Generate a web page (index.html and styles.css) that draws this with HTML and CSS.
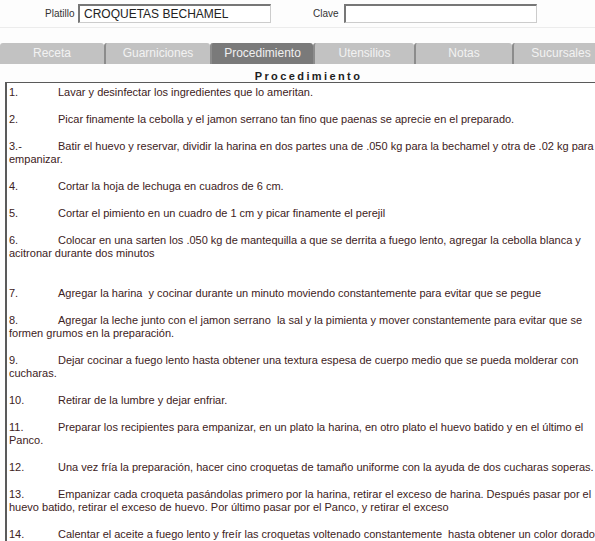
FILE: index.html
```html
<!DOCTYPE html>
<html lang="es">
<head>
<meta charset="utf-8">
<link rel="stylesheet" href="styles.css">
</head>
<body>
<div class="top">
  <label class="lbl lbl-platillo">Platillo</label>
  <div class="inp inp-platillo">CROQUETAS BECHAMEL</div>
  <label class="lbl lbl-clave">Clave</label>
  <div class="inp inp-clave"></div>
</div>
<div class="tabs">
  <div class="tab t1">Receta</div>
  <div class="tab t2">Guarniciones</div>
  <div class="tab t3 active">Procedimiento</div>
  <div class="tab t4">Utensilios</div>
  <div class="tab t5">Notas</div>
  <div class="tab t6">Sucursales</div>
</div>
<div class="title">Procedimiento</div>
<div class="box">
  <p><span class="n">1.</span>Lavar y desinfectar los ingredientes que lo ameritan.</p>
  <p><span class="n">2.</span>Picar finamente la cebolla y el jamon serrano tan fino que paenas se aprecie en el preparado.</p>
  <p><span class="n">3.-</span>Batir el huevo y reservar, dividir la harina en dos partes una de .050 kg para la bechamel y otra de .02 kg para empanizar.</p>
  <p><span class="n">4.</span>Cortar la hoja de lechuga en cuadros de 6 cm.</p>
  <p><span class="n">5.</span>Cortar el pimiento en un cuadro de 1 cm y picar finamente el perejil</p>
  <p class="extra"><span class="n">6.</span>Colocar en una sarten los .050 kg de mantequilla a que se derrita a fuego lento, agregar la cebolla blanca y acitronar durante dos minutos</p>
  <p><span class="n">7.</span>Agregar la harina&nbsp; y cocinar durante un minuto moviendo constantemente para evitar que se pegue</p>
  <p><span class="n">8.</span>Agregar la leche junto con el jamon serrano&nbsp; la sal y la pimienta y mover constantemente para evitar que se formen grumos en la preparación.</p>
  <p><span class="n">9.</span>Dejar cocinar a fuego lento hasta obtener una textura espesa de cuerpo medio que se pueda molderar con cucharas.</p>
  <p><span class="n">10.</span>Retirar de la lumbre y dejar enfriar.</p>
  <p><span class="n">11.</span>Preparar los recipientes para empanizar, en un plato la harina, en otro plato el huevo batido y en el último el Panco.</p>
  <p><span class="n">12.</span>Una vez fría la preparación, hacer cino croquetas de tamaño uniforme con la ayuda de dos cucharas soperas.</p>
  <p><span class="n">13.</span>Empanizar cada croqueta pasándolas primero por la harina, retirar el exceso de harina. Después pasar por el huevo batido, retirar el exceso de huevo. Por último pasar por el Panco, y retirar el exceso</p>
  <p><span class="n">14.</span>Calentar el aceite a fuego lento y freír las croquetas voltenado constantemente&nbsp; hasta obtener un color dorado</p>
</div>
</body>
</html>
```
FILE: styles.css
```css
html, body {
  margin: 0;
  padding: 0;
  background: #fdfdfd;
  overflow: hidden;
  width: 595px;
  height: 541px;
}
body {
  font-family: "Liberation Sans", Arial, sans-serif;
}
.top {
  display: flex;
  align-items: center;
  height: 28px;
  border-bottom: 1px solid #ececec;
  box-sizing: border-box;
}
.lbl {
  font-size: 10px;
  color: #333;
}
.lbl-platillo { margin-left: 45px; width: 33px; }
.lbl-clave { margin-left: 42px; width: 31px; }
.inp {
  height: 19px;
  box-sizing: border-box;
  border-top: 2px solid #777;
  border-left: 2px solid #777;
  border-right: 1px solid #ccc;
  border-bottom: 1px solid #ccc;
  background: #fff;
  font-size: 12px;
  color: #222;
  padding-left: 4px;
  line-height: 16px;
}
.inp-platillo { width: 193px; }
.inp-clave { width: 193px; }
.tabs {
  display: flex;
  margin-top: 15px;
  height: 21px;
  overflow: hidden;
}
.tab {
  flex: none;
  box-sizing: border-box;
  height: 21px;
  background: #c2c2c2;
  color: #f2f2f2;
  font-size: 12px;
  line-height: 21px;
  text-align: center;
  border-left: 2px solid #8c8c8c;
  border-top-left-radius: 3px;
  border-top-right-radius: 3px;
}
.t1 { width: 104px; border-left: none; }
.t2 { width: 106px; }
.t3 { width: 103px; }
.t4 { width: 101px; }
.t5 { width: 98px; }
.t6 { width: 96px; }
.tab.active {
  background: #7a7a7a;
  color: #f0f0f0;
}
.title {
  text-align: center;
  font-size: 11px;
  font-weight: bold;
  letter-spacing: 2.4px;
  color: #1e1e1e;
  margin-top: 6px;
  padding-left: 22px;
  line-height: 12px;
}
.box {
  margin-left: 5px;
  width: 596px;
  box-sizing: border-box;
  border-top: 1px solid #5a5a5a;
  border-left: 2px solid #5a5a5a;
  background: #fff;
  padding: 3px 0 0 2px;
  font-size: 11px;
  line-height: 13px;
  color: #3d2222;
  height: 460px;
  overflow: hidden;
}
.box p {
  margin: 0 0 14px 0;
}
.box p.extra {
  margin-bottom: 27px;
}
.n {
  display: inline-block;
  width: 49px;
}
```
